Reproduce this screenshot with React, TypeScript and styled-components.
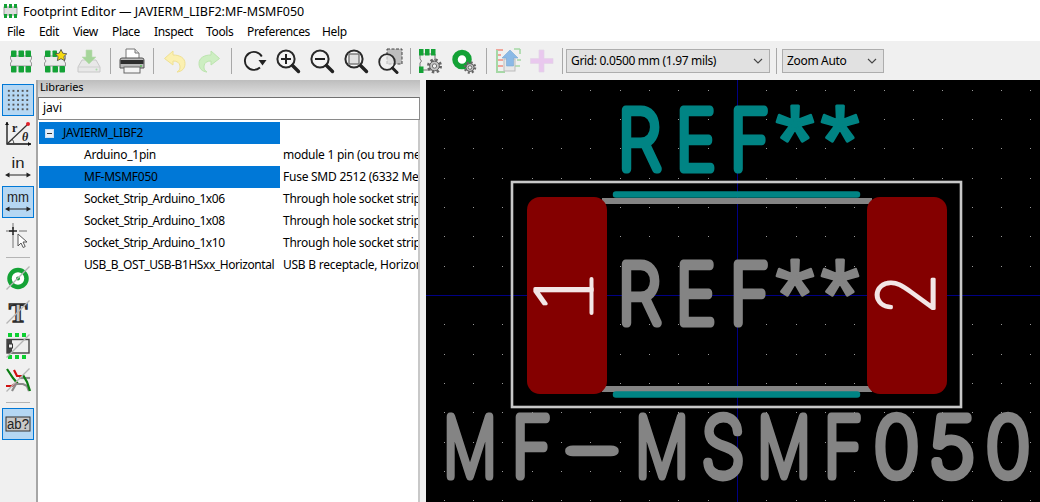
import React from 'react';
import styled, { createGlobalStyle } from 'styled-components';

const GlobalStyle = createGlobalStyle`
  html, body { margin: 0; padding: 0; background: #f0f0f0; }
  body { font-family: "Noto Sans", "Open Sans", sans-serif; font-size: 12px; color: #000; }
`;

const Window = styled.div`
  width: 1040px;
  height: 502px;
  display: flex;
  flex-direction: column;
  overflow: hidden;
`;

const TitleBar = styled.div`
  height: 22px;
  background: #fff;
  display: flex;
  align-items: center;
  gap: 5px;
  padding-left: 3px;
  font-size: 12.5px;
`;

const MenuBar = styled.div`
  height: 19px;
  background: #fff;
  display: flex;
  align-items: center;
  padding-left: 7px;
`;

const MenuItem = styled.span<{ $w: number }>`
  width: ${(p) => p.$w}px;
  font-size: 12px;
  letter-spacing: -0.35px;
`;

const TopToolbar = styled.div`
  height: 39px;
  background: #f0f0f0;
  display: flex;
  align-items: center;
  padding-left: 4px;
`;

const ToolButton = styled.div`
  width: 34px;
  height: 34px;
  flex: none;
  display: flex;
  align-items: center;
  justify-content: center;
`;

const ToolSep = styled.div<{ $w: number }>`
  width: ${(p) => p.$w}px;
  height: 26px;
  flex: none;
  display: flex;
  justify-content: center;
  &::before {
    content: '';
    width: 1px;
    background: #a8a8a8;
  }
`;

const Dropdown = styled.div<{ $w: number }>`
  width: ${(p) => p.$w}px;
  height: 24px;
  box-sizing: border-box;
  flex: none;
  background: #e1e1e1;
  border: 1px solid #adadad;
  display: flex;
  align-items: center;
  justify-content: space-between;
  padding: 0 6px 0 4px;
  font-size: 12px;
  letter-spacing: -0.33px;
`;

const Body = styled.div`
  flex: 1;
  display: flex;
  min-height: 0;
`;

const SideToolbar = styled.div`
  width: 36px;
  flex: none;
  background: #f0f0f0;
  display: flex;
  flex-direction: column;
  align-items: center;
  gap: 2px;
  padding-top: 4px;
  box-sizing: border-box;
`;

const SideButton = styled.div<{ $on?: boolean }>`
  width: 32px;
  height: 32px;
  box-sizing: border-box;
  display: flex;
  align-items: center;
  justify-content: center;
  background: ${(p) => (p.$on ? '#b5d7f3' : 'transparent')};
  border: 1px solid ${(p) => (p.$on ? '#0078d7' : 'transparent')};
`;

const SideSep = styled.div<{ $h: number }>`
  width: 24px;
  height: ${(p) => p.$h}px;
  display: flex;
  align-items: center;
  &::before {
    content: '';
    width: 100%;
    height: 1px;
    background: #b4b4b4;
  }
`;

const LibraryPanel = styled.div`
  width: 384px;
  flex: none;
  box-sizing: border-box;
  border-left: 2px solid #a6a6a6;
  background: #fff;
  display: flex;
  flex-direction: column;
`;

const PanelHeader = styled.div`
  height: 17px;
  padding-left: 2px;
  background: linear-gradient(#bdbdbd, #e2e2e2);
  font-size: 11px;
  line-height: 14px;
  letter-spacing: -0.15px;
`;

const SearchBox = styled.div`
  height: 23px;
  box-sizing: border-box;
  background: #fff;
  border: 1px solid #8a8a8a;
  border-top-color: #707070;
  padding-left: 4px;
  line-height: 20px;
  font-size: 12px;
`;

const Tree = styled.div`
  flex: 1;
  padding-top: 2px;
  border-right: 2px solid #c8c8c8;
  overflow: hidden;
`;

const Row = styled.div`
  height: 22px;
  display: flex;
  align-items: center;
  font-size: 12px;
  letter-spacing: -0.25px;
  white-space: nowrap;
  line-height: 20px;
`;

const NameCell = styled.div<{ $on?: boolean; $root?: boolean; $tight?: boolean }>`
  width: 241px;
  height: 100%;
  margin-left: 1px;
  flex: none;
  box-sizing: border-box;
  display: flex;
  align-items: center;
  padding-left: ${(p) => (p.$root ? 6 : 45)}px;
  padding-bottom: ${(p) => (p.$root ? 0 : 1)}px;
  gap: 9px;
  background: ${(p) => (p.$on ? '#0078d7' : 'transparent')};
  letter-spacing: ${(p) => (p.$tight ? '-0.43px' : '-0.25px')};
`;

const DescCell = styled.div`
  flex: 1;
  padding: 0 0 1px 3px;
  overflow: hidden;
`;

const Expander = styled.span`
  width: 9px;
  height: 9px;
  box-sizing: border-box;
  border: 1px solid #c9def5;
  background: #e6eef8;
  display: flex;
  align-items: center;
  justify-content: center;
  &::before {
    content: '';
    width: 5px;
    height: 1px;
    background: #333;
  }
`;

const Sash = styled.div`
  width: 6px;
  flex: none;
  background: #f0f0f0;
`;

const Canvas = styled.svg`
  flex: 1;
  display: block;
  background: #000;
`;

const CadText = styled.text<{ $c: string; $sw: number; $fs: number }>`
  font-family: Inter, "Noto Sans", sans-serif;
  font-weight: 100;
  font-size: ${(p) => p.$fs}px;
  fill: ${(p) => p.$c};
  stroke: ${(p) => p.$c};
  stroke-width: ${(p) => p.$sw}px;
  stroke-linejoin: round;
  stroke-linecap: round;
`;

const StarSpan = styled.tspan`
  font-family: "Liberation Sans", sans-serif;
  font-weight: 400;
  font-size: 100px;
  stroke-width: 3px;
`;

const IconText = styled.text<{ $fs: number; $w?: number }>`
  font-family: "Liberation Sans", sans-serif;
  font-size: ${(p) => p.$fs}px;
  font-weight: ${(p) => p.$w || 400};
  fill: #222;
`;

const IconSerif = styled(IconText)`
  font-family: "Liberation Serif", serif;
`;

const OutlinedT = styled(IconSerif)`
  fill: #c4c4c4;
  stroke: #2c2c2c;
  stroke-width: 1.3px;
`;

const I = ({ s = 26, children }: { s?: number; children: React.ReactNode }) => (
  <svg width={s} height={s} viewBox="0 0 26 26" fill="none">{children}</svg>
);

const Chevron = () => (
  <svg width="10" height="6" viewBox="0 0 10 6" fill="none"><path d="M1 1l4 4 4-4" stroke="#444" strokeWidth="1.1" /></svg>
);

const G = '#14a236';

const FpBody = () => (
  <path d="M2.5 8h21v3l-1.5 2 1.5 2v3h-21v-3l1.5-2-1.5-2z" fill="#ececec" stroke="#999" strokeWidth="1" />
);

const FpPads = ({ n = 3 }: { n?: number }) => (
  <>
    {[3, 10.5, 17.5].slice(0, n).map((x) => <rect key={x} x={x} y="2.5" width="5.5" height="6.5" rx=".8" fill={G} />)}
    {[3, 10.5, 17.5].map((x) => <rect key={x} x={x} y="18" width="5.5" height="6.5" rx=".8" fill={G} />)}
  </>
);

const Gear = ({ x, y, r = 5 }: { x: number; y: number; r?: number }) => {
  const tooth = (2 * Math.PI * r) / 16;
  return (
    <g transform={`translate(${x} ${y})`}>
      <circle r={r} fill="none" stroke="#666" strokeWidth={r * 0.5} strokeDasharray={`${tooth} ${tooth}`} />
      <circle r={r * 0.8} fill="#c4c4c4" stroke="#555" strokeWidth=".9" />
      <circle r={r * 0.36} fill="#f0f0f0" stroke="#555" strokeWidth=".8" />
    </g>
  );
};

const NewFootprint = () => <I><FpBody /><FpPads /></I>;
const WizardFootprint = () => (
  <I><FpBody /><FpPads n={1} />
    <rect x="10.5" y="2.5" width="4.5" height="6.5" rx=".8" fill={G} />
    <path d="M19 1.5l1.8 3.7 4 .6-2.9 2.8.7 4-3.6-1.9-3.6 1.9.7-4-2.9-2.8 4-.6z" fill="#f6d90f" stroke="#444" strokeWidth=".8" />
  </I>
);
const SaveIcon = () => (
  <I>
    <path d="M6 12h14l4 7v5H2v-5z" fill="#e8e8e8" stroke="#c8c8c8" />
    <path d="M2 19h22" stroke="#d0d0d0" />
    <circle cx="20.5" cy="21.5" r="1" fill="#a8dca8" />
    <path d="M10 2h6v7h4l-7 7-7-7h4z" fill="#a5d59a" stroke="#bcdcb4" strokeWidth=".6" />
  </I>
);
const PrintIcon = () => (
  <I>
    <path d="M7 1h9l4 4v6H7z" fill="#fff" stroke="#777" />
    <path d="M16 1v4h4" stroke="#777" fill="#ddd" />
    <path d="M3 10h20a2 2 0 012 2v8H1v-8a2 2 0 012-2z" fill="#bbb" stroke="#555" />
    <rect x="1.5" y="12" width="23" height="4" fill="#2e2e2e" />
    <rect x="5" y="19" width="16" height="6" fill="#f4f4f4" stroke="#666" />
    <circle cx="22" cy="18" r="1" fill="#5bbf5b" />
  </I>
);
const UndoIcon = () => (
  <I>
    <path d="M11 3L2.5 10.5 11 17v-4c4 0 6.5 1.5 7 5 .4 3-1 5-3 6 5-.5 8-3.5 8-8.5C23 10 18 7 11 7z" fill="#fbf0b0" stroke="#efe092" />
  </I>
);
const RedoIcon = () => (
  <I>
    <path d="M15 3l8.5 7.5L15 17v-4c-4 0-6.5 1.5-7 5-.4 3 1 5 3 6-5-.5-8-3.5-8-8.5C3 10 8 7 15 7z" fill="#cdeec2" stroke="#bce4ae" />
  </I>
);
const RefreshIcon = () => (
  <I>
    <path d="M19 19.5A9 9 0 1120.8 8.5" stroke="#222" strokeWidth="1.9" fill="none" />
    <path d="M17.5 12h8l-4 5.5z" fill="#222" />
  </I>
);
const Lens = ({ children }: { children?: React.ReactNode }) => (
  <>
    <circle cx="11" cy="11" r="8.6" fill="#fff" fillOpacity=".35" stroke="#2a2a2a" strokeWidth="2" />
    <path d="M17.5 17.5l6 6" stroke="#222" strokeWidth="3.4" strokeLinecap="round" />
    {children}
  </>
);
const ZoomInIcon = () => <I><Lens><path d="M6 11h10M11 6v10" stroke="#222" strokeWidth="2" /></Lens></I>;
const ZoomOutIcon = () => <I><Lens><path d="M6 11h10" stroke="#222" strokeWidth="2" /></Lens></I>;
const ZoomFitIcon = () => <I><Lens><rect x="6" y="6" width="10" height="10" fill="#e0e0e0" stroke="#777" strokeWidth="1.4" /></Lens></I>;
const ZoomSelIcon = () => (
  <I>
    <rect x="10" y="1" width="15" height="15" fill="#bdbdbd" stroke="#444" strokeDasharray="3 1.5" />
    <circle cx="10" cy="14" r="7.8" fill="#eee" fillOpacity=".7" stroke="#2a2a2a" strokeWidth="1.8" />
    <path d="M15.5 20l4.5 4.5" stroke="#222" strokeWidth="3" strokeLinecap="round" />
  </I>
);
const FpSettingsIcon = () => (
  <I>
    <path d="M3 6h15v5l-1.5 2L18 15v7H3v-7l1.5-2L3 11z" fill="#eee" stroke="#777" />
    {[2, 8, 14].map((x) => <rect key={x} x={x} y="1" width="4.5" height="6.5" fill={G} />)}
    <rect x="2" y="18.5" width="4.5" height="6.5" fill={G} />
    <Gear x={17.5} y={18} r={6} />
  </I>
);
const PadSettingsIcon = () => (
  <I>
    <circle cx="11" cy="11.5" r="7" stroke={G} strokeWidth="5.5" fill="#fff" />
    <Gear x={19} y={19.5} r={5} />
  </I>
);
const UpdateIcon = () => (
  <I>
    <path d="M1 2h7M1 7h5M1 12h7M1 18h7" stroke="#f0a59a" strokeWidth="2" />
    <path d="M2 2v22h8" stroke="#a5d8a5" strokeWidth="2" fill="none" />
    <path d="M19 1h6M25 1v5M22 12h4M20 18h5" stroke="#a5d8a5" strokeWidth="1.6" />
    <rect x="9" y="11" width="11" height="12" fill="#e8e8e8" stroke="#bbb" />
    <path d="M15 2l8 8h-4.5v8h-7v-8H7z" fill="#8bb9e6" stroke="#7aa7d4" strokeWidth=".6" />
  </I>
);
const PlusIcon = () => (
  <I><path d="M10 2h5v8.5h9v5h-9V24h-5v-8.5H1.5v-5H10z" fill="#e9c8ee" stroke="#e3d4e6" strokeWidth=".7" /></I>
);
const TitleLogo = () => (
  <svg width="15" height="14" viewBox="0 0 15 14">
    <rect x="1" y="3" width="13" height="8" fill="#ddd" stroke="#888" strokeWidth=".8" />
    {[1, 6, 11].map((x) => <rect key={x} x={x} y="0" width="3" height="4" fill={G} />)}
    {[1, 6, 11].map((x) => <rect key={'b' + x} x={x} y="10" width="3" height="4" fill={G} />)}
  </svg>
);

const Slash = () => <path d="M1.5 24.5L24.5 1.5" stroke="#b5b5b5" strokeWidth="1.2" />;

const GridIcon = () => (
  <I>
    {[3.8, 8.4, 13, 17.6, 22.2].map((y) => [3.8, 8.4, 13, 17.6, 22.2].map((x) => (
      <rect key={`${x}-${y}`} x={x - 0.9} y={y - 0.9} width="1.9" height="1.9" fill="#555" />
    )))}
  </I>
);
const PolarIcon = () => (
  <I>
    <path d="M2 1v22h24" stroke="#111" strokeWidth="1.3" />
    <path d="M2 1L0 4h4zM26 23l-3-2v4z" fill="#111" />
    <path d="M2 23L22 4" stroke="#333" strokeWidth="1.2" />
    <path d="M9 23a8 8 0 00-2-5" stroke="#444" />
    <circle cx="23" cy="3" r="2" fill="#e0202a" />
    <IconSerif x="7" y="11" $fs={12} $w={700}>r</IconSerif>
    <IconSerif x="17" y="20" $fs={12} $w={700} fontStyle="italic">θ</IconSerif>
  </I>
);
const UnitIcon = ({ label, w }: { label: string; w: number }) => (
  <I>
    <IconText x="13" y="13" textAnchor="middle" $fs={label === 'mm' ? 14 : 15} textLength={w} lengthAdjust="spacingAndGlyphs">{label}</IconText>
    <path d="M3 20h20" stroke="#222" strokeWidth="1" />
    <path d="M0 20l4.5-2.5v5zM26 20l-4.5-2.5v5z" fill="#222" />
  </I>
);
const CursorIcon = () => (
  <I>
    <path d="M1 8h8M14 8h8M8 0v6M8 11v14" stroke="#999" strokeWidth="1.4" />
    <path d="M4 8h8M8 4v8" stroke="#222" strokeWidth="1.5" />
    <path d="M13 11v12l3-3 2.2 4.5 2-1-2.2-4.5h4z" fill="#fff" stroke="#555" />
  </I>
);
const PadIcon = () => (
  <I>
    <circle cx="13" cy="13.5" r="8.5" stroke={G} strokeWidth="4.5" fill="#fff" />
    <circle cx="13" cy="13.5" r="2" fill={G} />
    <Slash />
  </I>
);
const TextIcon = () => (
  <I>
    <OutlinedT x="13" y="23" textAnchor="middle" $fs={28} $w={700}>T</OutlinedT>
    <Slash />
  </I>
);
const FpTextIcon = () => (
  <I>
    {[3, 10, 17].map((x) => <rect key={x} x={x} y="0" width="4" height="4" fill="#0ccf30" />)}
    {[3, 10, 17].map((x) => <rect key={'b' + x} x={x} y="22" width="4" height="4" fill="#0ccf30" />)}
    <rect x="2" y="6.5" width="22" height="13.5" fill="#eee" stroke="#444" strokeWidth="1.4" />
    <path d="M2 6.5h5v13.5H2z" fill="#444" />
    <rect x="3.5" y="11" width="4" height="4" fill="#eee" stroke="#333" />
    <Slash />
  </I>
);
const NetIcon = () => (
  <I>
    <path d="M2 2l6 9 5 6" stroke="#0a7d12" strokeWidth="2.2" fill="none" />
    <path d="M14 11h11" stroke="#8a8a8a" strokeWidth="2.2" />
    <path d="M9 3l3 6h5" stroke="#d01010" strokeWidth="2.2" fill="none" />
    <path d="M1 19h6l5-3" stroke="#d01010" strokeWidth="2.2" fill="none" />
    <path d="M7 24l4-7h7l4 2 2 5" stroke="#8a8a8a" strokeWidth="2.2" fill="none" />
    <path d="M18 8l4 7 3 9" stroke="#0a7d12" strokeWidth="2.2" fill="none" />
    <Slash />
  </I>
);
const AbIcon = () => (
  <I>
    <rect x="1" y="6" width="24" height="14" fill="#c8c8c8" stroke="#333" />
    <IconText x="13" y="18" textAnchor="middle" $fs={14} textLength={22} lengthAdjust="spacingAndGlyphs">ab?</IconText>
  </I>
);

const menus: [string, number][] = [
  ['File', 32], ['Edit', 34], ['View', 39], ['Place', 42], ['Inspect', 52], ['Tools', 41], ['Preferences', 75], ['Help', 40],
];

const rows = [
  ['Arduino_1pin', 'module 1 pin (ou trou mecanique de percage)'],
  ['MF-MSMF050', 'Fuse SMD 2512 (6332 Metric)'],
  ['Socket_Strip_Arduino_1x06', 'Through hole socket strip'],
  ['Socket_Strip_Arduino_1x08', 'Through hole socket strip'],
  ['Socket_Strip_Arduino_1x10', 'Through hole socket strip'],
  ['USB_B_OST_USB-B1HSxx_Horizontal', 'USB B receptacle, Horizontal'],
];

const PITCH = 29.33;
const dotsX = Array.from({ length: 23 }, (_, i) => 737 + (i - 11) * PITCH);
const dotsY = Array.from({ length: 15 }, (_, i) => 295 + (i - 7) * PITCH);

const TEAL = '#008484';
const GREY = '#848484';
const PAD = '#840000';

const CAD_FS = 81;
const CAD_SW = 9;
// advance, left bearing, ink width of the Inter glyphs, in em
const METRICS: Record<string, [number, number, number]> = {
  R: [0.6, 0.1, 0.47],
  E: [0.56, 0.1, 0.41],
  F: [0.54, 0.1, 0.39],
  M: [0.86, 0.1, 0.66],
  S: [0.58, 0.06, 0.46],
  '-': [0.58, 0.09, 0.4],
  '0': [0.62, 0.07, 0.48],
  '5': [0.58, 0.08, 0.42],
};

const CadWord = ({ glyphs, base, color }: { glyphs: [string, number, number][]; base: number; color: string }) => (
  <CadText y={base} $c={color} $sw={CAD_SW} $fs={CAD_FS}>
    {glyphs.map(([ch, l, r], i) => {
      if (ch === '*') return <StarSpan key={i} x={l - 1.5} y={base + 6.5}>*</StarSpan>;
      const [adv, lsb, ink] = METRICS[ch];
      // textLength scales the stroke with the glyph
      const scale = (r - l) / (ink * CAD_FS + CAD_SW);
      return (
        <tspan key={i} x={l + (CAD_SW / 2 - lsb * CAD_FS) * scale} textLength={adv * CAD_FS * scale} lengthAdjust="spacingAndGlyphs">
          {ch}
        </tspan>
      );
    })}
  </CadText>
);

const REF_GLYPHS: [string, number, number][] = [['R', 621, 663], ['E', 679, 716], ['F', 733, 770], ['*', 777, 814], ['*', 822, 859]];
const VALUE_GLYPHS: [string, number, number][] = [
  ['M', 446, 494], ['F', 515, 552], ['-', 565, 619], ['M', 638, 686], ['S', 702, 744],
  ['M', 760, 808], ['F', 827, 863], ['0', 875, 918], ['5', 931, 973], ['0', 987, 1029],
];

const BoardCanvas = () => (
  <Canvas viewBox="426 80 614 422" width="614" height="422">
    {dotsX.map((x) => dotsY.map((y) => <rect key={`${x}-${y}`} x={Math.round(x)} y={Math.round(y)} width="1" height="1" fill="#9a9a9a" />))}
    <path d="M737.5 80v422M426 295.5h614" stroke="#000084" strokeWidth="1" />

    <path d="M602 201h270M602 389h270" stroke={GREY} strokeWidth="6" />
    <path d="M616 194.5h241M616 394.5h241" stroke={TEAL} strokeWidth="6.5" strokeLinecap="round" />
    <rect x="512" y="182" width="449" height="225" fill="none" stroke="#c8c8c8" strokeWidth="2.6" />

    <rect x="527" y="197" width="80" height="197" rx="13" fill={PAD} />
    <rect x="867" y="197" width="80" height="197" rx="13" fill={PAD} />

    <CadWord glyphs={REF_GLYPHS} base={168.5} color={TEAL} />
    <CadWord glyphs={REF_GLYPHS} base={322.5} color={GREY} />
    <CadWord glyphs={VALUE_GLYPHS} base={475.5} color={GREY} />

    <CadText transform="translate(592 309.5) rotate(-90)" x="0" y="0" $c="#f3e6e6" $sw={3.2} $fs={78} textLength="30" lengthAdjust="spacingAndGlyphs">1</CadText>
    <path d="M591.5 279v34" stroke="#f3e6e6" strokeWidth="4" strokeLinecap="round" />
    <CadText transform="translate(934 315) rotate(-90)" x="0" y="0" $c="#f3e6e6" $sw={3.2} $fs={78} textLength="42" lengthAdjust="spacingAndGlyphs">2</CadText>
  </Canvas>
);

export default function App() {
  return (
    <Window>
      <GlobalStyle />
      <TitleBar><TitleLogo /><span>Footprint Editor — JAVIERM_LIBF2:MF-MSMF050</span></TitleBar>
      <MenuBar>
        {menus.map(([m, w]) => <MenuItem key={m} $w={w}>{m}</MenuItem>)}
      </MenuBar>
      <TopToolbar>
        <ToolButton><NewFootprint /></ToolButton>
        <ToolButton><WizardFootprint /></ToolButton>
        <ToolButton><SaveIcon /></ToolButton>
        <ToolSep $w={9} />
        <ToolButton><PrintIcon /></ToolButton>
        <ToolSep $w={9} />
        <ToolButton><UndoIcon /></ToolButton>
        <ToolButton><RedoIcon /></ToolButton>
        <ToolSep $w={11} />
        <ToolButton><RefreshIcon /></ToolButton>
        <ToolButton><ZoomInIcon /></ToolButton>
        <ToolButton><ZoomOutIcon /></ToolButton>
        <ToolButton><ZoomFitIcon /></ToolButton>
        <ToolButton><ZoomSelIcon /></ToolButton>
        <ToolSep $w={6} />
        <ToolButton><FpSettingsIcon /></ToolButton>
        <ToolButton><PadSettingsIcon /></ToolButton>
        <ToolSep $w={10} />
        <ToolButton><UpdateIcon /></ToolButton>
        <ToolButton><PlusIcon /></ToolButton>
        <ToolSep $w={7} />
        <Dropdown $w={204}>Grid: 0.0500 mm (1.97 mils)<Chevron /></Dropdown>
        <ToolSep $w={12} />
        <Dropdown $w={102}>Zoom Auto<Chevron /></Dropdown>
      </TopToolbar>
      <Body>
        <SideToolbar>
          <SideButton $on><GridIcon /></SideButton>
          <SideButton><PolarIcon /></SideButton>
          <SideButton><UnitIcon label="in" w={13} /></SideButton>
          <SideButton $on><UnitIcon label="mm" w={22} /></SideButton>
          <SideButton><CursorIcon /></SideButton>
          <SideSep $h={6} />
          <SideButton><PadIcon /></SideButton>
          <SideButton><TextIcon /></SideButton>
          <SideButton><FpTextIcon /></SideButton>
          <SideButton><NetIcon /></SideButton>
          <SideSep $h={8} />
          <SideButton $on><AbIcon /></SideButton>
        </SideToolbar>
        <LibraryPanel>
          <PanelHeader>Libraries</PanelHeader>
          <SearchBox>javi</SearchBox>
          <Tree>
            <Row>
              <NameCell $on $root><Expander /><span>JAVIERM_LIBF2</span></NameCell>
            </Row>
            {rows.map(([name, desc]) => (
              <Row key={name}>
                <NameCell $on={name === 'MF-MSMF050'} $tight={name.split('_').length > 2}>{name}</NameCell>
                <DescCell>{desc}</DescCell>
              </Row>
            ))}
          </Tree>
        </LibraryPanel>
        <Sash />
        <BoardCanvas />
      </Body>
    </Window>
  );
}
